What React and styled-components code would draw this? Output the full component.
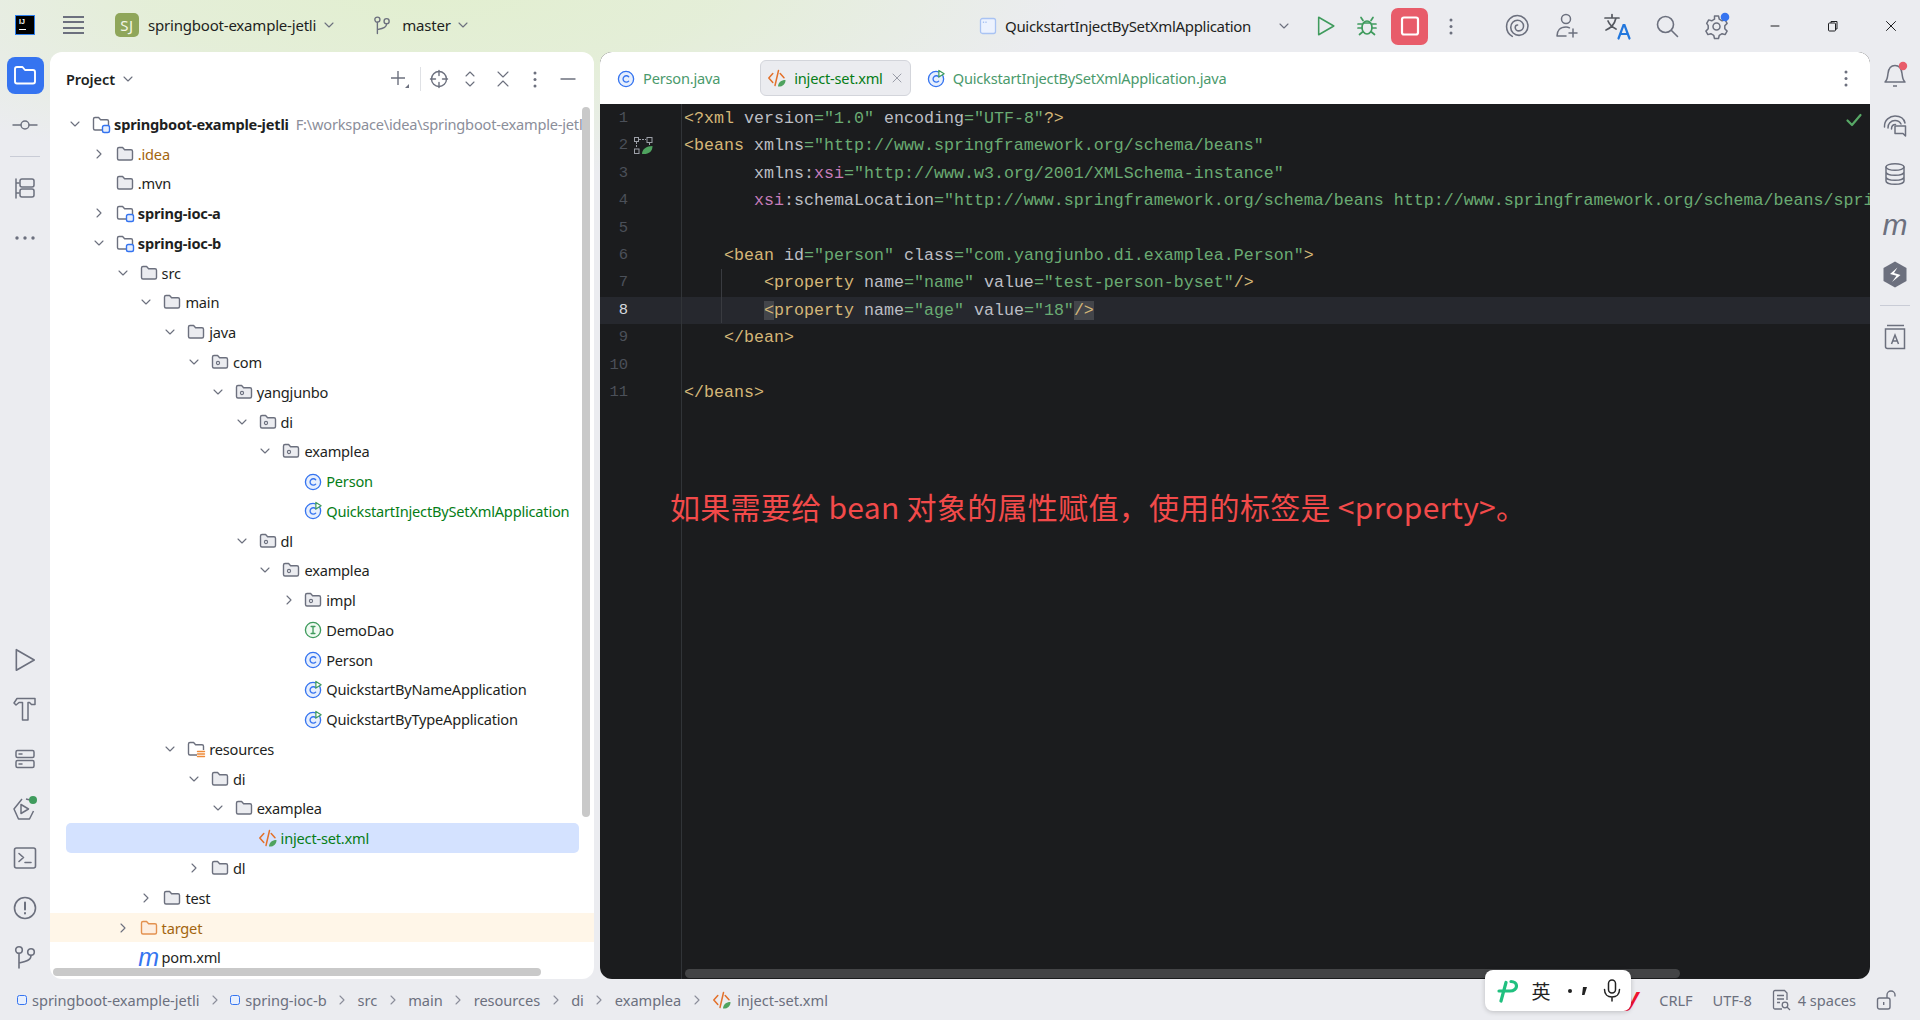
import React from "react";
import styled, { createGlobalStyle } from "styled-components";

const UI = `"Noto Sans", "Noto Sans CJK SC", sans-serif`;
const MONO = `"Liberation Mono", "DejaVu Sans Mono", monospace`;

const Global = createGlobalStyle`
  html, body { margin: 0; padding: 0; height: 100%; overflow: hidden; }
  #root { height: 100%; }
  * { box-sizing: border-box; }
`;

const Ide = styled.div`
  position: relative;
  width: 100%;
  height: 100vh;
  display: grid;
  grid-template-rows: 52px 927px 41px;
  font-family: ${UI};
  color: #1e1f22;
  background:
    radial-gradient(ellipse 640px 190px at 430px -10px, #e2efd0 0%, rgba(226,239,208,0.75) 45%, rgba(235,236,240,0) 100%),
    #ebecf0;
  overflow: hidden;
`;

/* ---------- top bar ---------- */
const TopBar = styled.header`
  display: flex;
  align-items: center;
  height: 52px;
`;
const Logo = styled.div`
  width: 20px;
  height: 20px;
  margin: 0 0 3px 15px;
  background: #000;
  border: 1px solid #2f80ed;
  color: #fff;
  font: 700 7px/9px "Liberation Sans", sans-serif;
  padding: 1px 0 0 3px;
  display: flex;
  flex-direction: column;
  gap: 3px;
  &::after { content: ""; width: 7px; height: 1px; background: #fff; }
`;
const Burger = styled.div`
  width: 21px;
  height: 18px;
  margin: 0 0 3px 28px;
  background: repeating-linear-gradient(to bottom, #6c707e 0 2px, transparent 2px 5.3px);
`;
const ProjectBadge = styled.div`
  width: 24px;
  height: 24px;
  margin-left: 31px;
  margin-bottom: 2px;
  border-radius: 5px;
  background: #8fa65a;
  color: #f4f6e8;
  font-size: 15px;
  letter-spacing: 0.6px;
  display: flex;
  align-items: center;
  justify-content: center;
`;
const TopLabel = styled.span`
  font-size: 15px;
  letter-spacing: -0.2px;
  white-space: nowrap;
  margin-left: ${p => p.$ml || 0}px;
  margin-bottom: 2px;
`;
const Drop = styled.span`
  display: flex;
  margin-left: ${p => p.$ml || 0}px;
  margin-bottom: ${p => p.$mb || 0}px;
`;
const RightCluster = styled.div`
  margin-left: auto;
  display: flex;
  align-items: center;
`;
const RunConfig = styled.div`
  width: 333px;
  padding: 0 13px 0 9px;
  display: flex;
  align-items: center;
  gap: 8px;
  font-size: 15px;
  letter-spacing: -0.32px;
  white-space: nowrap;
  & > :last-child { margin-left: auto; }
`;
const Slot = styled.div`
  width: ${p => p.$w}px;
  margin-left: ${p => p.$ml || 0}px;
  height: 40px;
  display: flex;
  align-items: center;
  justify-content: center;
  position: relative;
`;
const StopButton = styled.div`
  width: 37px;
  height: 37px;
  margin-left: 6px;
  border-radius: 7px;
  background: #e85c6a;
  display: flex;
  align-items: center;
  justify-content: center;
`;

/* ---------- body ---------- */
const Body = styled.div`
  display: grid;
  grid-template-columns: 50px 544px 1276px 50px;
  grid-template-rows: 927px;
  min-height: 0;
`;
const Rail = styled.nav`
  display: flex;
  flex-direction: column;
  align-items: center;
  min-height: 0;
`;
const RailSlot = styled.div`
  width: 100%;
  height: ${p => p.$h || 49.6}px;
  flex: none;
  display: flex;
  align-items: center;
  justify-content: center;
`;
const RailActive = styled.div`
  width: 37px;
  height: 37px;
  border-radius: 8px;
  background: #3574f0;
  display: flex;
  align-items: center;
  justify-content: center;
`;
const RailRule = styled.div`
  flex: none;
  width: 30px;
  height: 1px;
  margin: ${p => p.$m};
  background: #c9ccd6;
`;
const RailGap = styled.div`
  flex: none;
  height: ${p => p.$h}px;
`;
const RailM = styled.span`
  font: italic 400 30px/30px "Liberation Sans", sans-serif;
  color: #6c707e;
`;

/* project panel */
const ProjectPanel = styled.section`
  position: relative;
  background: #fff;
  border-radius: 12px;
  overflow: hidden;
`;
const PanelHead = styled.div`
  height: 57px;
  display: flex;
  align-items: center;
  padding: 0 0 3px 16px;
`;
const PanelTitle = styled.span`
  font-size: 14.5px;
  font-weight: 600;
  letter-spacing: -0.1px;
  margin-bottom: 1px;
`;
const PanelTools = styled.div`
  margin-left: auto;
  display: flex;
  align-items: center;
  padding-right: 11px;
`;
const ToolRule = styled.div`
  width: 1px;
  height: 24px;
  background: #dfe1e5;
  margin: 0 6px 0 8px;
`;
const Tree = styled.div`
  display: flex;
  flex-direction: column;
`;
const RowWrap = styled.div`
  height: 29.77px;
  flex: none;
  display: flex;
  align-items: center;
  white-space: nowrap;
  background: ${p => (p.$excluded ? "#fff6e8" : "transparent")};
  padding-left: ${p => 17 + p.$depth * 23.8}px;
  position: relative;
  z-index: 0;
`;
const SelectedBar = styled.div`
  position: absolute;
  z-index: -1;
  left: 16px;
  right: 15px;
  top: 0;
  bottom: 0;
  border-radius: 5px;
  background: #d4e2ff;
`;
const Twist = styled.span`
  width: 16px;
  height: 16px;
  flex: none;
  display: flex;
  align-items: center;
  justify-content: center;
`;
const NodeIcon = styled.span`
  width: 22px;
  height: 20px;
  flex: none;
  margin-left: ${p => p.$ml ?? 7}px;
  display: flex;
  align-items: center;
  justify-content: center;
`;
const NodeLabel = styled.span`
  font-size: 14.6px;
  letter-spacing: -0.2px;
  margin-left: 2px;
  font-weight: ${p => (p.$bold ? 700 : 400)};
  color: ${p => p.$color || "#1e1f22"};
`;
const NodeHint = styled.span`
  font-size: 14.6px;
  letter-spacing: -0.2px;
  color: #8b8e9a;
  margin-left: 7px;
`;
const MavenMark = styled.span`
  font: italic 400 25px/20px "Liberation Sans", sans-serif;
  color: #3574f0;
`;
const VScroll = styled.div`
  position: absolute;
  right: 4px;
  top: 55px;
  width: 8px;
  height: 710px;
  border-radius: 4px;
  background: #c9c9c9;
`;
const HScroll = styled.div`
  position: absolute;
  left: 3px;
  bottom: 3px;
  width: 488px;
  height: 8px;
  border-radius: 4px;
  background: #c9c9c9;
`;

/* editor */
const EditorPanel = styled.section`
  position: relative;
  margin-left: 6px;
  border-radius: 12px;
  overflow: hidden;
  display: flex;
  flex-direction: column;
  background: #1b1c1e;
  min-height: 0;
`;
const TabBar = styled.div`
  height: 52px;
  flex: none;
  background: #fff;
  display: flex;
  align-items: center;
  padding-left: 10px;
`;
const Tab = styled.div`
  height: 36px;
  display: flex;
  align-items: center;
  padding: 0 ${p => p.$pr ?? 14}px 0 6px;
  margin-right: ${p => p.$mr || 0}px;
  gap: 7px;
  border-radius: 6px;
  border: 1px solid ${p => (p.$active ? "#d3d5db" : "transparent")};
  background: ${p => (p.$active ? "#ebecf0" : "transparent")};
  font-size: 14.6px;
  letter-spacing: -0.2px;
  white-space: nowrap;
  color: ${p => (p.$active ? "#067d17" : "#4a9a6c")};
`;
const TabMenu = styled.div`
  margin-left: auto;
  margin-right: 22px;
  display: flex;
`;
const Code = styled.div`
  position: relative;
  flex: 1;
  min-height: 0;
  overflow: hidden;
  padding-top: 1px;
  font: 400 16.67px/27.4px ${MONO};
  color: #bcbec4;
`;
const GutterRule = styled.div`
  position: absolute;
  left: 81px;
  top: 0;
  bottom: 0;
  width: 1px;
  background: #313438;
`;
const IndentGuide = styled.div`
  position: absolute;
  left: 121px;
  top: 165px;
  width: 1px;
  height: 54px;
  background: #393b40;
`;
const Line = styled.div`
  height: 27.4px;
  display: flex;
  white-space: pre;
  background: ${p => (p.$current ? "#26282e" : "transparent")};
`;
const LineNo = styled.span`
  width: 28px;
  flex: none;
  text-align: right;
  color: ${p => (p.$current ? "#d5d8de" : "#4b5059")};
  font-size: 15.5px;
`;
const GutterMark = styled.span`
  width: 56px;
  flex: none;
  display: flex;
  align-items: center;
  padding-left: 6px;
`;
const Tag = styled.span` color: #d5b778; `;
const Attr = styled.span` color: #bcbec4; `;
const Val = styled.span` color: #6aab73; `;
const Ns = styled.span` color: #c77dbb; `;
const Match = styled.span`
  background: #43454a;
  color: #d5b778;
`;
const EditorCheck = styled.div`
  position: absolute;
  right: 6px;
  top: 6px;
  display: flex;
`;
const EditorScroll = styled.div`
  position: absolute;
  left: 85px;
  bottom: 1px;
  width: 995px;
  height: 9px;
  border-radius: 5px;
  background: #434446;
`;
const Note = styled.div`
  position: absolute;
  left: 70px;
  top: 381px;
  font: 400 30px/42px "Noto Sans CJK SC", "Noto Sans", sans-serif;
  letter-spacing: 0.3px;
  color: #f24a4a;
  white-space: nowrap;
`;

/* status */
const StatusBar = styled.footer`
  display: flex;
  align-items: center;
  padding-left: 17px;
  font-size: 14.6px;
  letter-spacing: -0.04px;
  color: #6c707e;
  white-space: nowrap;
`;
const Crumb = styled.span`
  display: flex;
  align-items: center;
  gap: 5px;
`;
const CrumbSep = styled.span`
  width: 31px;
  flex: none;
  display: flex;
  justify-content: center;
`;
const ModuleDot = styled.span`
  width: 10px;
  height: 10px;
  border: 1.6px solid #3574f0;
  border-radius: 2.5px;
  background: #e7effd;
`;
const StatusRight = styled.div`
  margin-left: auto;
  display: flex;
  align-items: center;
  padding-right: 22px;
`;
const RedY = styled.span`
  font: italic 700 25px/26px "Liberation Sans", sans-serif;
  color: #f0142f;
  margin-right: 20px;
  margin-bottom: 5px;
`;
const StatusItem = styled.span`
  margin-right: ${p => p.$mr}px;
  display: flex;
  align-items: center;
  gap: 6px;
`;
const Ime = styled.div`
  position: absolute;
  left: 1485px;
  top: 970px;
  width: 146px;
  height: 41px;
  border-radius: 8px;
  background: #fff;
  box-shadow: 0 1px 5px rgba(0,0,0,0.2);
  display: flex;
  align-items: center;
  color: #222;
  font: 400 19px/20px "Noto Sans CJK SC", sans-serif;
  z-index: 5;
`;
const ImeCell = styled.span`
  width: ${p => p.$w}px;
  flex: none;
  display: flex;
  align-items: center;
  justify-content: center;
`;

/* ---------- icons ---------- */
const S = ({ s = 20, w, h, vb, children, sw = 1.4, stroke = "#6c707e", fill = "none" }) => (
  <svg width={w || s} height={h || s} viewBox={vb || "0 0 20 20"} fill={fill} stroke={stroke} strokeWidth={sw} strokeLinecap="round" strokeLinejoin="round">
    {children}
  </svg>
);

const Chevron = ({ dir = "down", c = "#6c707e", s = 12 }) => (
  <S s={s} vb="0 0 12 12" stroke={c} sw={1.1}>
    {dir === "down" && <path d="M2 4l4 4 4-4" />}
    {dir === "right" && <path d="M4 2l4 4-4 4" />}
  </S>
);

const FOLDER = "M2.5 5a1.5 1.5 0 0 1 1.5-1.5h3.6l2 2.2h6.4a1.5 1.5 0 0 1 1.5 1.5v7.3a1.5 1.5 0 0 1-1.5 1.5H4a1.5 1.5 0 0 1-1.5-1.5z";
const Folder = ({ kind }) => {
  if (kind === "excluded")
    return <S><path d={FOLDER} fill="#fdeee0" stroke="#e3914f" /></S>;
  if (kind === "module")
    return (
      <S>
        <path d={FOLDER} fill="#fff" />
        <rect x="11.5" y="11.5" width="7" height="7" rx="1.8" fill="#e7effd" stroke="#3574f0" />
      </S>
    );
  if (kind === "res")
    return (
      <S>
        <path d={FOLDER} fill="#fff" />
        <rect x="11" y="11" width="8.5" height="8" fill="#fff" stroke="none" />
        <path d="M11.5 12.5h7M11.5 15h7M11.5 17.5h7" stroke="#ee8b3a" strokeWidth="1.4" />
      </S>
    );
  if (kind === "pkg")
    return (
      <S>
        <path d={FOLDER} fill="#ebecf0" />
        <circle cx="8" cy="11" r="1.6" fill="none" strokeWidth="1.1" />
      </S>
    );
  return <S><path d={FOLDER} fill="#ebecf0" /></S>;
};

const ClassIcon = ({ run, s = 19 }) => (
  <S s={s} stroke="#3574f0" sw={1.4}>
    <circle cx="9.5" cy="10.5" r="8" fill="#e7effd" />
    <path d="M12.3 8.2a3.4 3.4 0 1 0 0 4.6" />
    {run && <path d="M12.5 1.5v7l5.5-3.5z" fill="#fff" stroke="#3f9b5d" strokeWidth="1.3" />}
  </S>
);
const InterfaceIcon = () => (
  <S s={19} stroke="#3f9b5d">
    <circle cx="9.5" cy="10.5" r="8" fill="#f0faf2" />
    <path d="M7.5 6.8h4M9.5 6.8v7.4M7.5 14.2h4" />
  </S>
);
const XmlIcon = ({ s = 20 }) => (
  <S s={s} stroke="#e3702a" sw={1.5}>
    <path d="M5.8 5.5L1.8 10l4 4.5M11.5 2.5L8 17.5M13.2 5.5l3.8 4.2" />
    <path d="M11 18.5c0-4 3.2-6.6 7.5-6.6 0 4.2-2.7 6.8-7.5 6.6z" fill="#4fa35f" stroke="none" />
  </S>
);

const Commit = () => (
  <S s={26} vb="0 0 26 26"><circle cx="13" cy="13" r="4" /><path d="M1 13h8M17 13h8" /></S>
);
const Structure = () => (
  <S s={24} vb="0 0 24 24" sw={1.5}>
    <path d="M3 3v19M3 7h3M3 17h3" />
    <rect x="7" y="3" width="14" height="8" rx="2" />
    <rect x="7" y="13" width="14" height="8" rx="2" />
  </S>
);
const Dots3 = ({ vertical, c = "#6c707e" }) => (
  <svg width={vertical ? 4 : 20} height={vertical ? 18 : 4} viewBox={vertical ? "0 0 4 18" : "0 0 20 4"} fill={c}>
    {[2, 10, 18].map(v => vertical ? <circle key={v} cx="2" cy={v === 18 ? 16 : v === 2 ? 3 : 9.5} r="1.5" /> : <circle key={v} cx={v} cy="2" r="1.7" />)}
  </svg>
);
const RunOutline = ({ c = "#6c707e", s = 24, sw = 1.5 }) => (
  <S s={s} vb="0 0 24 24" stroke={c} sw={sw}><path d="M4 2.5v19l16.5-9.5z" /></S>
);
const Hammer = () => (
  <S s={26} vb="0 0 26 26" sw={1.5}>
    <path d="M5 2.5h18v6h-3.500l-2-2H16V24h-5.500V6.500H7L4 9 2 7z" />
  </S>
);
const Services = () => (
  <S s={24} vb="0 0 24 24" sw={1.5}>
    <rect x="3" y="3.500" width="18" height="7" rx="1.5" />
    <rect x="3" y="13.500" width="18" height="7" rx="1.5" />
    <path d="M6 7h3M6 17h3" />
  </S>
);
const HexRun = () => (
  <svg width="28" height="28" viewBox="0 0 28 28" fill="none" stroke="#6c707e" strokeWidth="1.5" strokeLinejoin="round">
    <path d="M11 4L3 14l4.5 10h11l4-8M19 5l-4-1" />
    <path d="M10 9.500v9l7.500-4.500z" />
    <circle cx="22" cy="5" r="4" fill="#3f9b5d" stroke="none" />
  </svg>
);
const Terminal = () => (
  <S s={26} vb="0 0 26 26" sw={1.6}>
    <rect x="2.500" y="3" width="21" height="20" rx="2" />
    <path d="M7 8.500l4.500 4-4.500 4M13 17.500h6" />
  </S>
);
const Problems = () => (
  <S s={26} vb="0 0 26 26" sw={1.6}>
    <circle cx="13" cy="13" r="10.500" />
    <path d="M13 7.500v7M13 18v.4" strokeWidth="2" />
  </S>
);
const GitBranch = ({ s = 26, sw = 1.6 }) => (
  <S s={s} vb="0 0 26 26" sw={sw}>
    <circle cx="7" cy="6" r="3.300" />
    <circle cx="19" cy="8" r="3.300" />
    <path d="M7 9.500V24M19 11.500c0 4-3 5.500-12 7.500" />
  </S>
);

const Bell = () => (
  <svg width="28" height="28" viewBox="0 0 28 28" fill="none" stroke="#6c707e" strokeWidth="1.5" strokeLinejoin="round">
    <path d="M4 21c2.500-2 2.500-5 3-8.500C7.500 8 10 4.500 14 4.500s6.500 3.500 7 8c.5 3.500.5 6.500 3 8.500z" />
    <path d="M12 25h4" />
    <circle cx="22" cy="5" r="4.200" fill="#e85c6a" stroke="none" />
  </svg>
);
const AiChat = () => (
  <S s={26} vb="0 0 26 26" sw={1.5}>
    <path d="M2.500 14C2 7 8 3 13 3s9 2.500 10 7M6 15c-.5-4 3-7.500 7-7.500 3 0 5 1.500 6 3.500M9.500 16c0-3 2-4.500 4-4.500" />
    <path d="M13 13h10.500v10l-2.500-2.500h-8z" fill="#ebecf0" />
  </S>
);
const Database = () => (
  <S s={24} vb="0 0 24 24" sw={1.5}>
    <ellipse cx="12" cy="5" rx="9" ry="3.300" />
    <path d="M3 5v14c0 1.900 4 3.300 9 3.300s9-1.400 9-3.300V5M3 10c0 1.900 4 3.300 9 3.300s9-1.400 9-3.300M3 15c0 1.900 4 3.300 9 3.300s9-1.400 9-3.300" />
  </S>
);
const HexLogo = () => (
  <svg width="24" height="27" viewBox="0 0 24 26">
    <path d="M12 0l11.500 6.500v13L12 26 .5 19.500v-13z" fill="#6c707e" />
    <path d="M14.500 6L7 12.500l6.500 1.800L9 20.500l8.500-7-6.500-2z" fill="#fff" />
  </svg>
);
const BookA = () => (
  <svg width="22" height="26" viewBox="0 0 22 26" fill="none" stroke="#6c707e" strokeWidth="1.5">
    <path d="M3 1.500h17M1.500 5h19v19.500H3.500a2 2 0 0 1-2-2z" />
    <path d="M7.500 20l3.500-9 3.500 9M8.800 17h4.400" />
  </svg>
);
const FolderFilled = () => (
  <S s={26} vb="0 0 26 26" stroke="#fff" sw={1.9}>
    <path d="M3 7a2 2 0 0 1 2-2h5.500l2.500 3h8a2 2 0 0 1 2 2v9.500a2 2 0 0 1-2 2H5a2 2 0 0 1-2-2z" />
  </S>
);

const Plus = () => (
  <svg width="22" height="22" viewBox="0 0 22 22" fill="none" stroke="#6c707e" strokeWidth="1.4">
    <path d="M2 10h14M9 3v14" />
    <path d="M20 16v4h-4z" fill="#6c707e" stroke="none" />
  </svg>
);
const Locate = () => (
  <S s={20}><circle cx="10" cy="10" r="7.500" /><path d="M10 1.500v5M10 13.500v5M1.500 10h5M13.500 10h5" /></S>
);
const Expand = () => <S s={18} vb="0 0 18 18" sw={1.1}><path d="M5 6l4-4 4 4M5 12l4 4 4-4" /></S>;
const Collapse = () => <S s={18} vb="0 0 18 18" sw={1.1}><path d="M4 2l5 5 5-5M4 16l5-5 5 5" /></S>;
const Minus = () => <S s={18} vb="0 0 18 18"><path d="M2 9h14" /></S>;

const ConfigIcon = () => (
  <svg width="18" height="18" viewBox="0 0 18 18" fill="#ecf2fe" stroke="#a9c3f3" strokeWidth="1.3">
    <rect x="1.500" y="1.500" width="15" height="15" rx="2" />
    <path d="M4.500 4.500v1.500M7 4.500v1.500" />
  </svg>
);
const Bug = () => (
  <svg width="22" height="22" viewBox="0 0 22 22" fill="none" stroke="#3f9b5d" strokeWidth="1.7" strokeLinecap="round">
    <ellipse cx="11" cy="12.500" rx="5" ry="6.500" />
    <path d="M7 5.500l-2-3M15 5.500l2-3M6 9H2M16 9h4M6 13H2M16 13h4M6.500 17l-3 2.500M15.500 17l3 2.500M7.500 8h7" />
  </svg>
);
const Swirl = () => (
  <S s={25} vb="0 0 24 24" sw={1.5}>
    <path d="M7 21.500C3.500 19.500 1.500 16 1.500 12 1.500 6.200 6.200 1.500 12 1.500c5 0 9.500 4 10 9 .5 5.500-3.500 10-8.500 10-4.500 0-8-3.500-8-7.500 0-4 3-7 6.500-7 3.300 0 5.800 2.500 5.800 5.500 0 2.700-2 4.700-4.500 4.700-2 0-3.500-1.500-3.500-3.200 0-1.500 1-2.500 2.300-2.500" />
  </S>
);
const PersonPlus = () => (
  <svg width="24" height="26" viewBox="0 0 24 26" fill="none" stroke="#6c707e" strokeWidth="1.5" strokeLinecap="round">
    <circle cx="11" cy="6" r="4.500" />
    <path d="M2 23c0-5 3-9 9-9 1.500 0 2.500.3 3.500.8M2 23h9M18 16v8M14 20h8" />
  </svg>
);
const Translate = () => (
  <svg width="28" height="28" viewBox="0 0 28 28" fill="none" stroke="#55585f" strokeWidth="1.7" strokeLinecap="round">
    <path d="M2 6h14M9 2.500V6M13 6c-1.200 5-5 10-10 12M5 9c1.500 3.500 5 6.500 8 8" />
    <path d="M15.500 26.500L20.500 13h1l5 13.500M17.300 22h7.400" stroke="#2277dd" strokeWidth="2.200" />
  </svg>
);
const Search = () => (
  <S s={24} vb="0 0 24 24" sw={1.6}><circle cx="10.500" cy="10.500" r="8" /><path d="M16.500 16.500l6 6" /></S>
);
const Gear = () => (
  <svg width="28" height="28" viewBox="0 0 28 28" fill="none" stroke="#6c707e" strokeWidth="1.5" strokeLinejoin="round">
    <path d="M11.500 4h4l.8 3.200 2.800 1.600 3-.9 2 3.500-2.300 2.300v3.100l2.300 2.300-2 3.500-3-.9-2.800 1.600-.8 3.200h-4l-.8-3.200-2.800-1.600-3 .9-2-3.500 2.300-2.300v-3.100L3.700 11.400l2-3.500 3 .9 2.800-1.600z" />
    <circle cx="13.500" cy="14.500" r="3.500" />
    <circle cx="22" cy="5" r="4.300" fill="#3574f0" stroke="none" />
  </svg>
);
const WinMin = () => <S s={12} vb="0 0 12 12" stroke="#1e1f22" sw={1}><path d="M2 6h8" /></S>;
const WinRestore = () => (
  <svg width="12" height="12" viewBox="0 0 12 12" fill="none" stroke="#1e1f22" strokeWidth="1">
    <rect x="1.500" y="3" width="7" height="8" rx="1" />
    <path d="M4 3V1.500h6V9H8.500" />
  </svg>
);
const WinClose = () => <S s={12} vb="0 0 12 12" stroke="#1e1f22" sw={1}><path d="M1.500 1.500l9 9M10.500 1.500l-9 9" /></S>;
const Check = () => <S s={20} vb="0 0 20 20" stroke="#57a866" sw={2.2}><path d="M3.500 10.500l4.500 4.500 8.500-10" /></S>;
const BeanGutter = () => (
  <svg width="19" height="18" viewBox="0 0 19 18" fill="none" stroke="#9da0a8" strokeWidth="1">
    <rect x=".5" y=".5" width="4" height="4" />
    <rect x="13" y=".5" width="5" height="5" />
    <rect x=".5" y="12" width="4.500" height="4.500" />
    <path d="M5 2.500h7M2.500 5v6M15.500 6v3" strokeDasharray="2 1" />
    <path d="M8 17c0-5 4.500-8 10.500-8 0 5.500-3.500 8.500-10.500 8z" fill="#4fa35f" stroke="none" />
  </svg>
);
const DocSearch = () => (
  <svg width="20" height="22" viewBox="0 0 20 22" fill="none" stroke="#6c707e" strokeWidth="1.3">
    <path d="M10 20H3a1.500 1.500 0 0 1-1.500-1.500V3A1.500 1.500 0 0 1 3 1.500h9.500L15 4v7" />
    <path d="M5 6.500h7M5 10h7M5 13.500h3" />
    <circle cx="13" cy="16" r="2.800" />
    <path d="M15 18l3 3" />
  </svg>
);
const Lock = () => (
  <svg width="22" height="22" viewBox="0 0 22 22" fill="none" stroke="#6c707e" strokeWidth="1.4">
    <rect x="1.500" y="9" width="12.500" height="11" rx="2" />
    <path d="M11 9V6a4 4 0 0 1 8 0v1.500M7.700 13v3" />
  </svg>
);
const PinyinP = () => (
  <svg width="22" height="24" viewBox="0 0 22 24" fill="none" stroke="#20c07f" strokeWidth="3.2" strokeLinecap="round">
    <path d="M10 3.500L5 22M3 12h11c4 0 6.500-2.500 6.500-5S18 2.500 15 2.500" />
  </svg>
);
const Mic = () => (
  <svg width="18" height="24" viewBox="0 0 18 24" fill="none" stroke="#222" strokeWidth="1.5" strokeLinecap="round">
    <rect x="5.500" y="1" width="7" height="13" rx="3.500" />
    <path d="M1.500 10.500c0 4.500 3 7.500 7.500 7.500s7.500-3 7.500-7.500M9 18v4" />
  </svg>
);
const PuncDots = () => (
  <svg width="22" height="12" viewBox="0 0 22 12" fill="#222">
    <circle cx="3" cy="6" r="2" />
    <path d="M16 2h4l-2.500 8h-2.500z" />
  </svg>
);

/* ---------- data ---------- */
const G = "#067d17";
const rows = [
  { d: 0, t: "down", i: "module", l: "springboot-example-jetli", b: 1, hint: "F:\\workspace\\idea\\springboot-example-jetli" },
  { d: 1, t: "right", i: "plain", l: ".idea", c: "#a3650f" },
  { d: 1, i: "plain", l: ".mvn" },
  { d: 1, t: "right", i: "module", l: "spring-ioc-a", b: 1 },
  { d: 1, t: "down", i: "module", l: "spring-ioc-b", b: 1 },
  { d: 2, t: "down", i: "plain", l: "src" },
  { d: 3, t: "down", i: "plain", l: "main" },
  { d: 4, t: "down", i: "plain", l: "java" },
  { d: 5, t: "down", i: "pkg", l: "com" },
  { d: 6, t: "down", i: "pkg", l: "yangjunbo" },
  { d: 7, t: "down", i: "pkg", l: "di" },
  { d: 8, t: "down", i: "pkg", l: "examplea" },
  { d: 9, i: "class", l: "Person", c: G },
  { d: 9, i: "run", l: "QuickstartInjectBySetXmlApplication", c: G },
  { d: 7, t: "down", i: "pkg", l: "dl" },
  { d: 8, t: "down", i: "pkg", l: "examplea" },
  { d: 9, t: "right", i: "pkg", l: "impl" },
  { d: 9, i: "iface", l: "DemoDao" },
  { d: 9, i: "class", l: "Person" },
  { d: 9, i: "run", l: "QuickstartByNameApplication" },
  { d: 9, i: "run", l: "QuickstartByTypeApplication" },
  { d: 4, t: "down", i: "res", l: "resources" },
  { d: 5, t: "down", i: "plain", l: "di" },
  { d: 6, t: "down", i: "plain", l: "examplea" },
  { d: 7, i: "xml", l: "inject-set.xml", c: G, sel: 1 },
  { d: 5, t: "right", i: "plain", l: "dl" },
  { d: 3, t: "right", i: "plain", l: "test" },
  { d: 2, t: "right", i: "excluded", l: "target", c: "#a3650f", ex: 1 },
  { d: 2, i: "maven", l: "pom.xml" },
];

const nodeIcon = i => {
  if (i === "class") return <ClassIcon />;
  if (i === "run") return <ClassIcon run />;
  if (i === "iface") return <InterfaceIcon />;
  if (i === "xml") return <XmlIcon />;
  if (i === "maven") return <MavenMark>m</MavenMark>;
  return <Folder kind={i} />;
};

const TreeRow = ({ r }) => (
  <RowWrap $depth={r.d} $excluded={r.ex}>
    {r.sel && <SelectedBar />}
    <Twist>{r.t && <Chevron dir={r.t} />}</Twist>
    <NodeIcon $ml={r.d === 9 ? 5 : 7}>{nodeIcon(r.i)}</NodeIcon>
    <NodeLabel $bold={r.b} $color={r.c}>{r.l}</NodeLabel>
    {r.hint && <NodeHint>{r.hint}</NodeHint>}
  </RowWrap>
);

const codeLines = [
  <><Tag>{"<?xml "}</Tag><Attr>version</Attr><Val>="1.0"</Val> <Attr>encoding</Attr><Val>="UTF-8"</Val><Tag>{"?>"}</Tag></>,
  <><Tag>{"<beans "}</Tag><Attr>xmlns</Attr><Val>="http://www.springframework.org/schema/beans"</Val></>,
  <>{"       "}<Attr>xmlns:</Attr><Ns>xsi</Ns><Val>="http://www.w3.org/2001/XMLSchema-instance"</Val></>,
  <>{"       "}<Ns>xsi</Ns><Attr>:schemaLocation</Attr><Val>="http://www.springframework.org/schema/beans http://www.springframework.org/schema/beans/spring-beans.xsd"</Val><Tag>{">"}</Tag></>,
  <> </>,
  <>{"    "}<Tag>{"<bean "}</Tag><Attr>id</Attr><Val>="person"</Val> <Attr>class</Attr><Val>="com.yangjunbo.di.examplea.Person"</Val><Tag>{">"}</Tag></>,
  <>{"        "}<Tag>{"<property "}</Tag><Attr>name</Attr><Val>="name"</Val> <Attr>value</Attr><Val>="test-person-byset"</Val><Tag>{"/>"}</Tag></>,
  <>{"        "}<Match>{"<"}</Match><Tag>{"property "}</Tag><Attr>name</Attr><Val>="age"</Val> <Attr>value</Attr><Val>="18"</Val><Match>{"/>"}</Match></>,
  <>{"    "}<Tag>{"</bean>"}</Tag></>,
  <> </>,
  <Tag>{"</beans>"}</Tag>,
];

const crumbs = ["src", "main", "resources", "di", "examplea"];

export default function App() {
  return (
    <Ide>
      <Global />
      <TopBar>
        <Logo>IJ</Logo>
        <Burger />
        <ProjectBadge>SJ</ProjectBadge>
        <TopLabel $ml={9}>springboot-example-jetli</TopLabel>
        <Drop $ml={7} $mb={2}><Chevron /></Drop>
        <Drop $ml={37} $mb={2}><GitBranch s={20} sw={1.8} /></Drop>
        <TopLabel $ml={10}>master</TopLabel>
        <Drop $ml={6} $mb={2}><Chevron /></Drop>
        <RightCluster>
          <RunConfig>
            <ConfigIcon />
            <span>QuickstartInjectBySetXmlApplication</span>
            <Chevron />
          </RunConfig>
          <Slot $w={46}><RunOutline c="#3f9b5d" s={22} sw={1.7} /></Slot>
          <Slot $w={36}><Bug /></Slot>
          <StopButton>
            <svg width="22" height="22" viewBox="0 0 22 22" fill="none" stroke="#fff" strokeWidth="2.2"><rect x="3" y="2.500" width="16" height="17" rx="2" /></svg>
          </StopButton>
          <Slot $w={46}><Dots3 vertical /></Slot>
          <Slot $w={50} $ml={18}><Swirl /></Slot>
          <Slot $w={50}><PersonPlus /></Slot>
          <Slot $w={50}><Translate /></Slot>
          <Slot $w={50}><Search /></Slot>
          <Slot $w={50}><Gear /></Slot>
          <Slot $w={58} $ml={4}><WinMin /></Slot>
          <Slot $w={58}><WinRestore /></Slot>
          <Slot $w={58}><WinClose /></Slot>
        </RightCluster>
      </TopBar>

      <Body>
        <Rail>
          <RailSlot $h={46}><RailActive><FolderFilled /></RailActive></RailSlot>
          <RailSlot $h={54}><Commit /></RailSlot>
          <RailRule $m="4px 0" />
          <RailSlot $h={54}><Structure /></RailSlot>
          <RailSlot $h={46}><Dots3 /></RailSlot>
          <RailGap $h={374} />
          <RailSlot><RunOutline s={26} /></RailSlot>
          <RailSlot><Hammer /></RailSlot>
          <RailSlot><Services /></RailSlot>
          <RailSlot><HexRun /></RailSlot>
          <RailSlot><Terminal /></RailSlot>
          <RailSlot><Problems /></RailSlot>
          <RailSlot><GitBranch /></RailSlot>
        </Rail>

        <ProjectPanel>
          <PanelHead>
            <PanelTitle>Project</PanelTitle>
            <Drop $ml={7}><Chevron /></Drop>
            <PanelTools>
              <Slot $w={24}><Plus /></Slot>
              <ToolRule />
              <Slot $w={24}><Locate /></Slot>
              <Slot $w={38}><Expand /></Slot>
              <Slot $w={28}><Collapse /></Slot>
              <Slot $w={36}><Dots3 vertical /></Slot>
              <Slot $w={30}><Minus /></Slot>
            </PanelTools>
          </PanelHead>
          <Tree>
            {rows.map((r, i) => <TreeRow key={i} r={r} />)}
          </Tree>
          <VScroll />
          <HScroll />
        </ProjectPanel>

        <EditorPanel>
          <TabBar>
            <Tab $mr={25}><ClassIcon /><span>Person.java</span></Tab>
            <Tab $active $pr={6} $mr={9}>
              <XmlIcon />
              <span>inject-set.xml</span>
              <Slot $w={14}><S s={12} vb="0 0 12 12" stroke="#9a9da8" sw={1}><path d="M2 2l8 8M10 2l-8 8" /></S></Slot>
            </Tab>
            <Tab><ClassIcon run /><span>QuickstartInjectBySetXmlApplication.java</span></Tab>
            <TabMenu><Dots3 vertical /></TabMenu>
          </TabBar>
          <Code>
            <GutterRule />
            <IndentGuide />
            {codeLines.map((c, i) => (
              <Line key={i} $current={i === 7}>
                <LineNo $current={i === 7}>{i + 1}</LineNo>
                <GutterMark>{i === 1 && <BeanGutter />}</GutterMark>
                <span>{c}</span>
              </Line>
            ))}
            <EditorCheck><Check /></EditorCheck>
            <Note>如果需要给 bean 对象的属性赋值，使用的标签是 &lt;property&gt;。</Note>
            <EditorScroll />
          </Code>
        </EditorPanel>

        <Rail>
          <RailSlot $h={46}><Bell /></RailSlot>
          <RailSlot $h={56}><AiChat /></RailSlot>
          <RailSlot $h={40}><Database /></RailSlot>
          <RailSlot $h={62}><RailM>m</RailM></RailSlot>
          <RailSlot $h={36}><HexLogo /></RailSlot>
          <RailRule $m="13px 0 15px" />
          <RailSlot $h={32}><BookA /></RailSlot>
        </Rail>
      </Body>

      <StatusBar>
        <Crumb><ModuleDot />springboot-example-jetli</Crumb>
        <CrumbSep><Chevron dir="right" c="#8b8e9a" /></CrumbSep>
        <Crumb><ModuleDot />spring-ioc-b</Crumb>
        {crumbs.map(c => (
          <React.Fragment key={c}>
            <CrumbSep><Chevron dir="right" c="#8b8e9a" /></CrumbSep>
            <Crumb>{c}</Crumb>
          </React.Fragment>
        ))}
        <CrumbSep><Chevron dir="right" c="#8b8e9a" /></CrumbSep>
        <Crumb><XmlIcon />inject-set.xml</Crumb>
        <StatusRight>
          <RedY>y</RedY>
          <StatusItem $mr={20}>CRLF</StatusItem>
          <StatusItem $mr={20}>UTF-8</StatusItem>
          <StatusItem $mr={20}><DocSearch />4 spaces</StatusItem>
          <Lock />
        </StatusRight>
      </StatusBar>

      <Ime>
        <ImeCell $w={44}><PinyinP /></ImeCell>
        <ImeCell $w={24}>英</ImeCell>
        <ImeCell $w={50}><PuncDots /></ImeCell>
        <ImeCell $w={18}><Mic /></ImeCell>
      </Ime>
    </Ide>
  );
}
